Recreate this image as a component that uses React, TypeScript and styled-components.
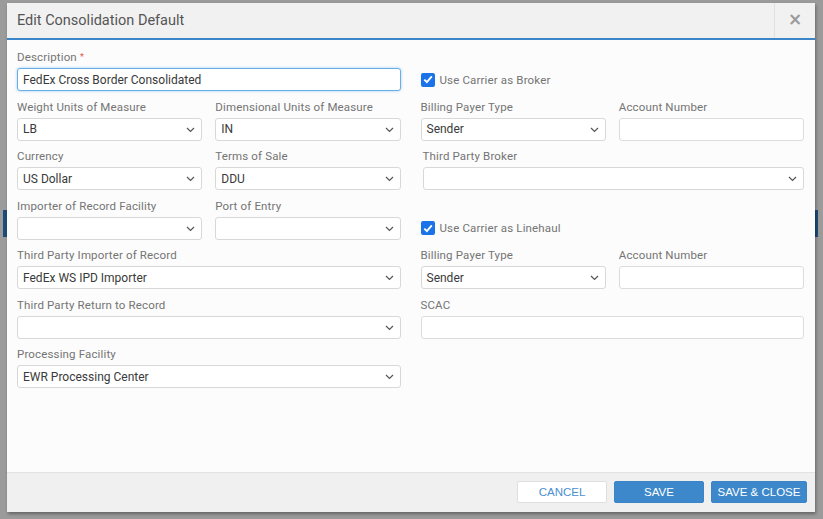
import React, { useState } from 'react';
import styled, { createGlobalStyle } from 'styled-components';

const GlobalStyle = createGlobalStyle`
  html, body {
    margin: 0;
    padding: 0;
    background: #9b9b9b;
    font-family: Roboto, "Liberation Sans", Arial, sans-serif;
  }
  * { box-sizing: border-box; }
`;

const Backdrop = styled.div`
  position: relative;
  width: 823px;
  height: 519px;
  padding: 3px 8px 7px 7px;
  background: #9b9b9b;
  overflow: hidden;
`;

// a strip of the page that is under the overlay
const PageStrip = styled.div`
  position: absolute;
  left: 3px;
  right: 5px;
  top: 210px;
  height: 27px;
  background: #1f4b78;
`;

const Modal = styled.div`
  position: relative;
  display: flex;
  flex-direction: column;
  height: 100%;
  background: #fcfcfc;
  box-shadow: 1px 2px 3px rgba(0, 0, 0, 0.35);
`;

const Header = styled.div`
  display: flex;
  align-items: stretch;
  height: 37px;
  background: #f1f1f1;
  border-bottom: 2px solid #3b86c8;
`;

const Title = styled.h4`
  flex: 1;
  margin: 0;
  padding: 0 0 1px 10px;
  display: flex;
  align-items: center;
  font-size: 14.5px;
  font-weight: 400;
  color: #555;
`;

const CloseCell = styled.button`
  width: 41px;
  border: none;
  border-left: 1px solid #e0e0e0;
  background: transparent;
  color: #9a9a9a;
  font-size: 17px;
  font-weight: 700;
  font-family: "DejaVu Sans", sans-serif;
  padding: 0 0 3px 0;
  cursor: pointer;
`;

const Body = styled.div`
  flex: 1;
  padding: 10px 11px 0 10px;
  display: grid;
  grid-template-columns: 1fr 1fr;
  grid-auto-rows: 41px;
  column-gap: 20px;
  row-gap: 8.5px;
  align-content: start;
`;

const Pair = styled.div`
  display: grid;
  grid-template-columns: 1fr 1fr;
  column-gap: 13px;
`;

const Field = styled.div<{ $shift?: number }>`
  display: flex;
  flex-direction: column;
  min-width: 0;
  padding-left: ${(p) => p.$shift || 0}px;
`;

const Label = styled.label`
  height: 14px;
  line-height: 14px;
  margin-bottom: 4px;
  font-size: 11.5px;
  letter-spacing: 0.15px;
  color: #747474;
  white-space: nowrap;
`;

const Req = styled.span`
  color: #e05a4f;
  font-size: 9px;
  margin-left: 3px;
  vertical-align: 1px;
`;

const TextInput = styled.input<{ $focused?: boolean }>`
  height: 23px;
  width: 100%;
  padding: 0 5px;
  font-family: Roboto, "Liberation Sans", Arial, sans-serif;
  font-size: 12px;
  color: #3a3a3a;
  background: #fff;
  border: 1px solid ${(p) => (p.$focused ? '#66afe9' : '#dcdcdc')};
  border-radius: 3px;
  box-shadow: ${(p) => (p.$focused ? '0 0 3px rgba(102,175,233,0.6)' : 'none')};
  outline: none;
`;

const SelectBox = styled.div`
  position: relative;
  height: 23px;
  display: flex;
  align-items: center;
  padding: 0 20px 0 5px;
  font-size: 12px;
  color: #3a3a3a;
  background: #fff;
  border: 1px solid #d8d8d8;
  border-radius: 3px;
  white-space: nowrap;
`;

const Chevron = styled.svg`
  position: absolute;
  right: 6px;
  top: 8px;
`;

const CheckRow = styled.label`
  align-self: end;
  height: 23px;
  display: flex;
  align-items: center;
  gap: 5px;
  font-size: 11.5px;
  letter-spacing: 0.15px;
  color: #747474;
`;

const CheckBox = styled.span`
  width: 14px;
  height: 14px;
  border-radius: 2px;
  background: #1a73e8;
  display: flex;
  align-items: center;
  justify-content: center;
`;

const Footer = styled.div`
  height: 40px;
  display: flex;
  justify-content: flex-end;
  align-items: center;
  gap: 7px;
  padding: 0 8px 1px 0;
  background: #f0f0f0;
  border-top: 1px solid #e2e2e2;
`;

const Button = styled.button<{ $primary?: boolean; $w: number }>`
  width: ${(p) => p.$w}px;
  height: 22px;
  padding: 0;
  white-space: nowrap;
  border-radius: 2px;
  font-family: "Liberation Sans", Arial, sans-serif;
  font-size: 11.5px;
  text-transform: uppercase;
  cursor: pointer;
  border: 1px solid ${(p) => (p.$primary ? '#3a85c7' : '#dedede')};
  background: ${(p) => (p.$primary ? '#3d88ca' : '#fff')};
  color: ${(p) => (p.$primary ? '#fff' : '#4a8fd0')};
`;

function Select({ value = '' }: { value?: string }) {
  return (
    <SelectBox>
      {value}
      <Chevron width="9" height="6" viewBox="0 0 9 6">
        <path d="M1 1l3.5 3.5L8 1" fill="none" stroke="#555" strokeWidth="1.2" />
      </Chevron>
    </SelectBox>
  );
}

function Check({ text }: { text: string }) {
  return (
    <CheckRow>
      <CheckBox>
        <svg width="10" height="9" viewBox="0 0 10 9">
          <path d="M1.3 4.6l2.6 2.6L8.8 1.4" fill="none" stroke="#fff" strokeWidth="1.9" />
        </svg>
      </CheckBox>
      {text}
    </CheckRow>
  );
}

function App() {
  const [desc, setDesc] = useState('FedEx Cross Border Consolidated');

  return (
    <Backdrop>
      <GlobalStyle />
      <PageStrip />
      <Modal>
        <Header>
          <Title>Edit Consolidation Default</Title>
          <CloseCell>×</CloseCell>
        </Header>
        <Body>
          <Field>
            <Label>
              Description<Req>*</Req>
            </Label>
            <TextInput $focused value={desc} onChange={(e) => setDesc(e.target.value)} />
          </Field>
          <Check text="Use Carrier as Broker" />

          <Pair>
            <Field>
              <Label>Weight Units of Measure</Label>
              <Select value="LB" />
            </Field>
            <Field>
              <Label>Dimensional Units of Measure</Label>
              <Select value="IN" />
            </Field>
          </Pair>
          <Pair>
            <Field>
              <Label>Billing Payer Type</Label>
              <Select value="Sender" />
            </Field>
            <Field>
              <Label>Account Number</Label>
              <TextInput />
            </Field>
          </Pair>

          <Pair>
            <Field>
              <Label>Currency</Label>
              <Select value="US Dollar" />
            </Field>
            <Field>
              <Label>Terms of Sale</Label>
              <Select value="DDU" />
            </Field>
          </Pair>
          <Field $shift={2}>
            <Label>Third Party Broker</Label>
            <Select />
          </Field>

          <Pair>
            <Field>
              <Label>Importer of Record Facility</Label>
              <Select />
            </Field>
            <Field>
              <Label>Port of Entry</Label>
              <Select />
            </Field>
          </Pair>
          <Check text="Use Carrier as Linehaul" />

          <Field>
            <Label>Third Party Importer of Record</Label>
            <Select value="FedEx WS IPD Importer" />
          </Field>
          <Pair>
            <Field>
              <Label>Billing Payer Type</Label>
              <Select value="Sender" />
            </Field>
            <Field>
              <Label>Account Number</Label>
              <TextInput />
            </Field>
          </Pair>

          <Field>
            <Label>Third Party Return to Record</Label>
            <Select />
          </Field>
          <Field>
            <Label>SCAC</Label>
            <TextInput />
          </Field>

          <Field>
            <Label>Processing Facility</Label>
            <Select value="EWR Processing Center" />
          </Field>
        </Body>
        <Footer>
          <Button $w={90}>Cancel</Button>
          <Button $w={90} $primary>
            Save
          </Button>
          <Button $w={96} $primary>
            Save &amp; Close
          </Button>
        </Footer>
      </Modal>
    </Backdrop>
  );
}

export default App;
